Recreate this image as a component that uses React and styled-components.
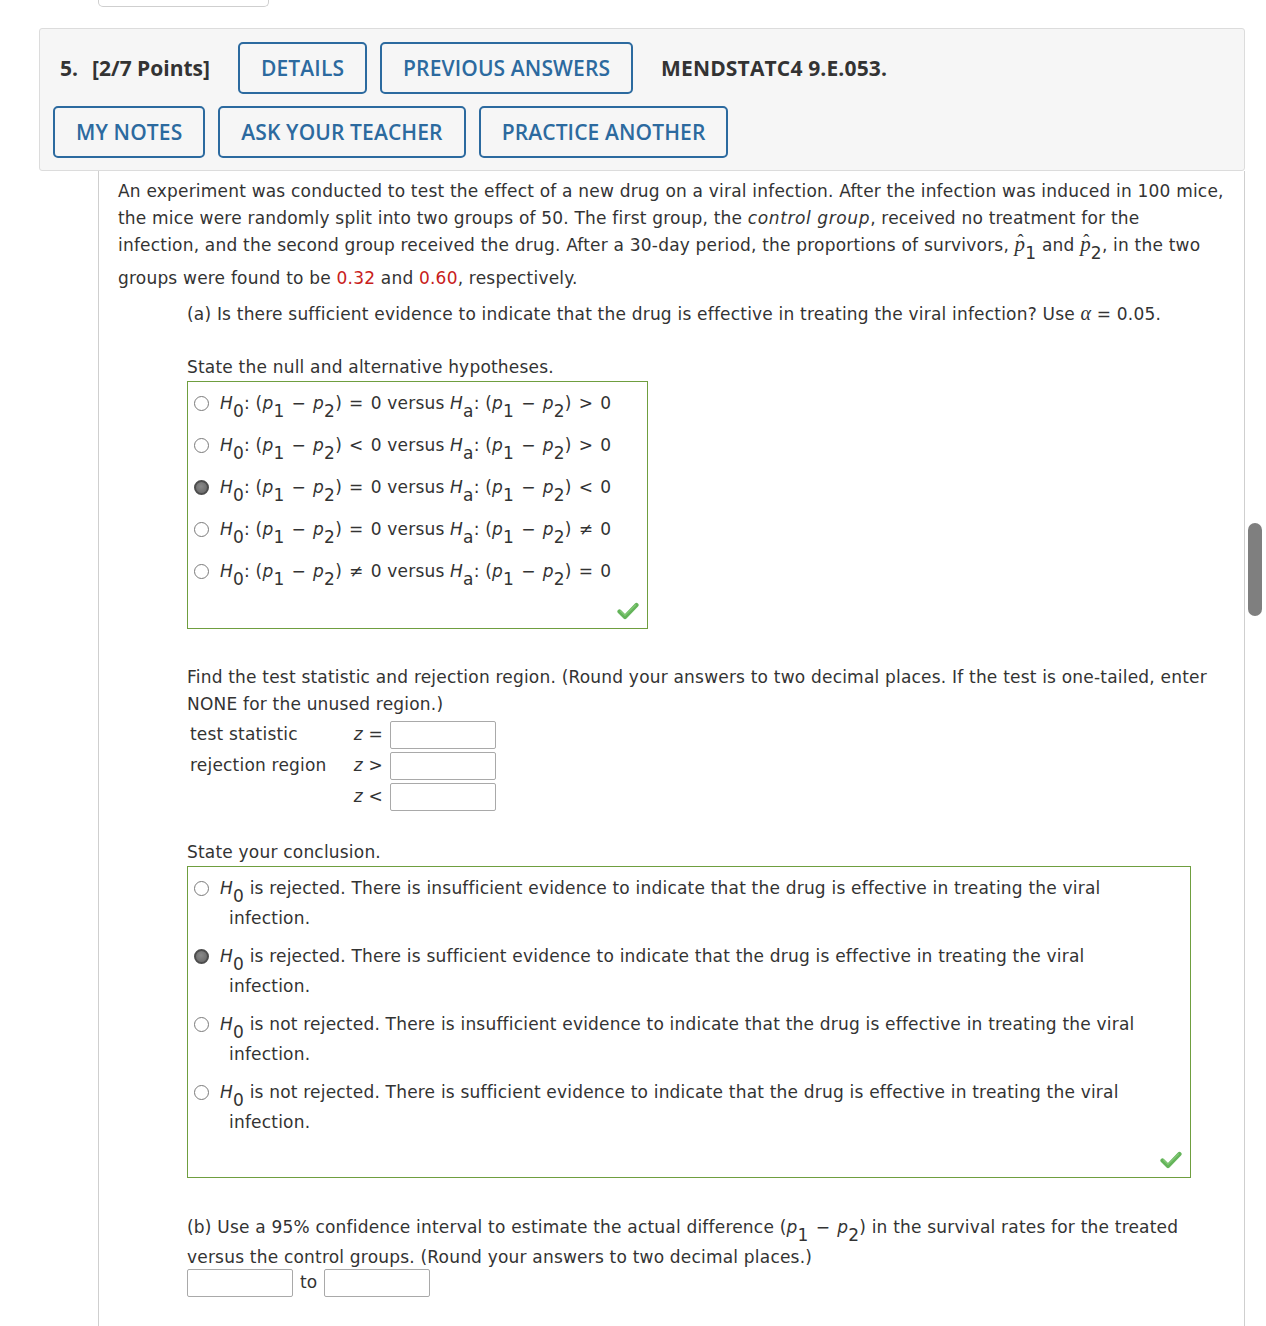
import React from "react";
import styled, { createGlobalStyle } from "styled-components";

const GlobalStyle = createGlobalStyle`
  html, body {
    margin: 0;
    padding: 0;
    background: #ffffff;
    overflow: hidden;
  }
  body {
    font-family: "DejaVu Sans", Verdana, sans-serif;
  }
`;

const Page = styled.div`
  position: relative;
  width: 1266px;
  height: 1326px;
  overflow: hidden;
`;

/* bottom of the previous question's control, scrolled mostly out of view */
const TopStub = styled.div`
  margin-left: 98px;
  width: 169px;
  height: 6px;
  border: 1px solid #cfcfcf;
  border-top: none;
  border-radius: 0 0 5px 5px;
`;

const Question = styled.section`
  margin: 21px 0 0 39px;
  width: 1206px;
`;

const Header = styled.header`
  display: flex;
  flex-direction: column;
  gap: 12px;
  padding: 13px 13px 12px;
  background: #f6f6f6;
  border: 1px solid #dcdcdc;
  border-radius: 3px;
  font-family: "Open Sans", sans-serif;
`;

const HeaderRow = styled.div`
  display: flex;
  align-items: center;
  gap: 13px;
  padding-left: ${(p) => p.$inset || 0}px;
`;

const Title = styled.h2`
  display: flex;
  gap: 14px;
  margin: 0 15px 0 0;
  font-size: 21px;
  font-weight: 700;
  color: #333333;
`;

const Code = styled.span`
  margin-left: 15px;
  font-size: 21px;
  font-weight: 700;
  letter-spacing: 0.15px;
  color: #333333;
`;

const OutlineButton = styled.button`
  height: 52px;
  padding: 0 21px;
  background: transparent;
  border: 2px solid #2c6a9f;
  border-radius: 5px;
  color: #2c6a9f;
  font-family: "Open Sans", sans-serif;
  font-size: 21px;
  font-weight: 600;
  letter-spacing: 0.12px;
  cursor: pointer;
`;

const Body = styled.div`
  margin-left: 59px;
  padding: 7px 18px 200px 19px;
  border-left: 1px solid #cfcfcf;
  border-right: 1px solid #cfcfcf;
  font-size: 17px;
  letter-spacing: 0.2px;
  line-height: 27px;
  color: #333333;
`;

const Para = styled.p`
  margin: ${(p) => p.$top || 0}px 0 0;
`;

const Part = styled.div`
  margin-left: 69px;
`;

const Emph = styled.i`
  letter-spacing: 0.6px;
`;

const Given = styled.span`
  color: #c8201b;
`;

const Var = styled.i`
  font-style: italic;
`;

const Op = styled.span`
  margin: 0 1.5px;
`;

const Sub = styled.sub`
  font-size: 100%;
  line-height: ${(p) => (p.$deep ? 24 : 18)}px;
  vertical-align: -0.47em;
`;

const Greek = styled.i`
  font-family: "Liberation Serif", serif;
  font-size: 20px;
  font-style: italic;
`;

/* p with a hat accent laid over it */
const HatP = styled.span`
  position: relative;
  display: inline-block;
  font-family: "Liberation Serif", serif;
  font-size: 21px;
  font-style: italic;
  line-height: 22px;
  &::after {
    content: "ˆ";
    position: absolute;
    left: 3px;
    top: -3px;
    font-size: 18px;
    font-style: normal;
  }
`;

const ChoiceBox = styled.div`
  box-sizing: border-box;
  width: ${(p) => p.$width}px;
  padding: 8px ${(p) => p.$right || 10}px 8px 6px;
  border: 1px solid #6f9e3f;
`;

const Choice = styled.label`
  display: flex;
  align-items: flex-start;
  margin-bottom: 12px;
  line-height: 26px;
  cursor: pointer;
`;

const Radio = styled.span`
  flex: none;
  box-sizing: border-box;
  width: 15px;
  height: 15px;
  margin: 6px 11px 0 0;
  border-radius: 50%;
  border: ${(p) => (p.$on ? "2px solid #4d4d4d" : "1px solid #7a7a7a")};
  background: ${(p) =>
    p.$on
      ? "radial-gradient(circle at 45% 40%, #8a8a8a 0%, #6e6e6e 70%)"
      : "#ffffff"};
`;

const ChoiceText = styled.span`
  padding-left: 9px;
  text-indent: -9px;
`;

/* sits after the last choice; its top margin collapses with the choice's bottom margin */
const CheckRow = styled.div`
  display: flex;
  justify-content: flex-end;
  margin: ${(p) => p.$top || 12}px ${(p) => p.$edge || 0}px 0 0;
`;

const StatGrid = styled.div`
  display: grid;
  grid-template-columns: 164px 37px 108px;
  row-gap: 3px;
  align-items: center;
  margin-top: 3px;
`;

const StatLabel = styled.div`
  padding-left: 3px;
`;

const Relation = styled.div`
  padding-right: 5px;
  text-align: right;
`;

const AnswerInput = styled.input`
  box-sizing: border-box;
  width: 106px;
  height: 28px;
  margin-left: ${(p) => p.$shift || 0}px;
  border: 1px solid #a9a9a9;
  border-radius: 2px;
  background: #ffffff;
`;

const IntervalRow = styled.div`
  display: flex;
  align-items: center;
  gap: 7px;
  margin-top: -2px;
`;

const ScrollThumb = styled.div`
  position: absolute;
  left: 1248px;
  top: 523px;
  width: 14px;
  height: 93px;
  border-radius: 7px;
  background: #7f7f7f;
`;

const CheckMark = () => (
  <svg width="22" height="18" viewBox="0 0 22 18" aria-hidden="true">
    <path
      d="M2.5 9.5 L8 15 L19.5 3"
      fill="none"
      stroke="#64b45a"
      strokeWidth="4.2"
      strokeLinecap="round"
      strokeLinejoin="round"
    />
    <path
      d="M3.5 9 L8 13.4 L18.5 3"
      fill="none"
      stroke="#8fd181"
      strokeWidth="1.2"
      strokeLinecap="round"
      strokeLinejoin="round"
      opacity="0.7"
    />
  </svg>
);

const Diff = () => (
  <>
    (<Var>p</Var>
    <Sub>1</Sub> <Op>−</Op> <Var>p</Var>
    <Sub>2</Sub>)
  </>
);

const Relation2 = ({ children }) => {
  const [op, value] = children.split(" ");
  return (
    <>
      <Op>{op}</Op> {value}
    </>
  );
};

const Hypothesis = ({ h0, ha }) => (
  <>
    <Var>H</Var>
    <Sub>0</Sub>: <Diff /> <Relation2>{h0}</Relation2> versus <Var>H</Var>
    <Sub>a</Sub>: <Diff /> <Relation2>{ha}</Relation2>
  </>
);

const hypotheses = [
  { h0: "= 0", ha: "> 0" },
  { h0: "< 0", ha: "> 0" },
  { h0: "= 0", ha: "< 0", on: true },
  { h0: "= 0", ha: "≠ 0" },
  { h0: "≠ 0", ha: "= 0" },
];

const conclusions = [
  { verdict: "is rejected", strength: "insufficient" },
  { verdict: "is rejected", strength: "sufficient", on: true },
  { verdict: "is not rejected", strength: "insufficient" },
  { verdict: "is not rejected", strength: "sufficient" },
];

export default function App() {
  return (
    <Page>
      <GlobalStyle />
      <TopStub />
      <Question>
        <Header>
          <HeaderRow $inset={7}>
            <Title>
              <span>5.</span>
              <span>[2/7 Points]</span>
            </Title>
            <OutlineButton>DETAILS</OutlineButton>
            <OutlineButton>PREVIOUS ANSWERS</OutlineButton>
            <Code>MENDSTATC4 9.E.053.</Code>
          </HeaderRow>
          <HeaderRow>
            <OutlineButton>MY NOTES</OutlineButton>
            <OutlineButton>ASK YOUR TEACHER</OutlineButton>
            <OutlineButton>PRACTICE ANOTHER</OutlineButton>
          </HeaderRow>
        </Header>

        <Body>
          <Para>
            An experiment was conducted to test the effect of a new drug on a
            viral infection. After the infection was induced in 100 mice, the
            mice were randomly split into two groups of 50. The first group, the{" "}
            <Emph>control group</Emph>, received no treatment for the
            infection, and the second group received the drug. After a 30-day
            period, the proportions of survivors, <HatP>p</HatP>
            <Sub $deep>1</Sub> and <HatP>p</HatP>
            <Sub $deep>2</Sub>, in the two groups were found to be{" "}
            <Given>0.32</Given> and <Given>0.60</Given>, respectively.
          </Para>

          <Part>
            <Para $top={8}>
              (a) Is there sufficient evidence to indicate that the drug is
              effective in treating the viral infection? Use <Greek>α</Greek> =
              0.05.
            </Para>

            <Para $top={26}>State the null and alternative hypotheses.</Para>
            <ChoiceBox $width={461}>
              {hypotheses.map((h, i) => (
                <Choice key={i}>
                  <Radio $on={h.on} />
                  <ChoiceText>
                    <Hypothesis h0={h.h0} ha={h.ha} />
                  </ChoiceText>
                </Choice>
              ))}
              <CheckRow $top={14} $edge={-2}>
                <CheckMark />
              </CheckRow>
            </ChoiceBox>

            <Para $top={35}>
              Find the test statistic and rejection region. (Round your answers
              to two decimal places. If the test is one-tailed, enter NONE for
              the unused region.)
            </Para>
            <StatGrid>
              <StatLabel>test statistic</StatLabel>
              <Relation>
                <Var>z</Var> =
              </Relation>
              <AnswerInput $shift={2} />
              <StatLabel>rejection region</StatLabel>
              <Relation>
                <Var>z</Var> &gt;
              </Relation>
              <AnswerInput $shift={2} />
              <StatLabel />
              <Relation>
                <Var>z</Var> &lt;
              </Relation>
              <AnswerInput $shift={2} />
            </StatGrid>

            <Para $top={28}>State your conclusion.</Para>
            <ChoiceBox $width={1004} $right={30}>
              {conclusions.map((c, i) => (
                <Choice key={i}>
                  <Radio $on={c.on} />
                  <ChoiceText>
                    <Var>H</Var>
                    <Sub>0</Sub> {c.verdict}. There is {c.strength} evidence to
                    indicate that the drug is effective in treating the viral
                    infection.
                  </ChoiceText>
                </Choice>
              ))}
              <CheckRow $top={16} $edge={-22}>
                <CheckMark />
              </CheckRow>
            </ChoiceBox>

            <Para $top={36}>
              (b) Use a 95% confidence interval to estimate the actual
              difference <Diff /> in the survival rates for the treated versus
              the control groups. (Round your answers to two decimal places.)
            </Para>
            <IntervalRow>
              <AnswerInput />
              <span>to</span>
              <AnswerInput />
            </IntervalRow>
          </Part>
        </Body>
      </Question>
      <ScrollThumb />
    </Page>
  );
}
